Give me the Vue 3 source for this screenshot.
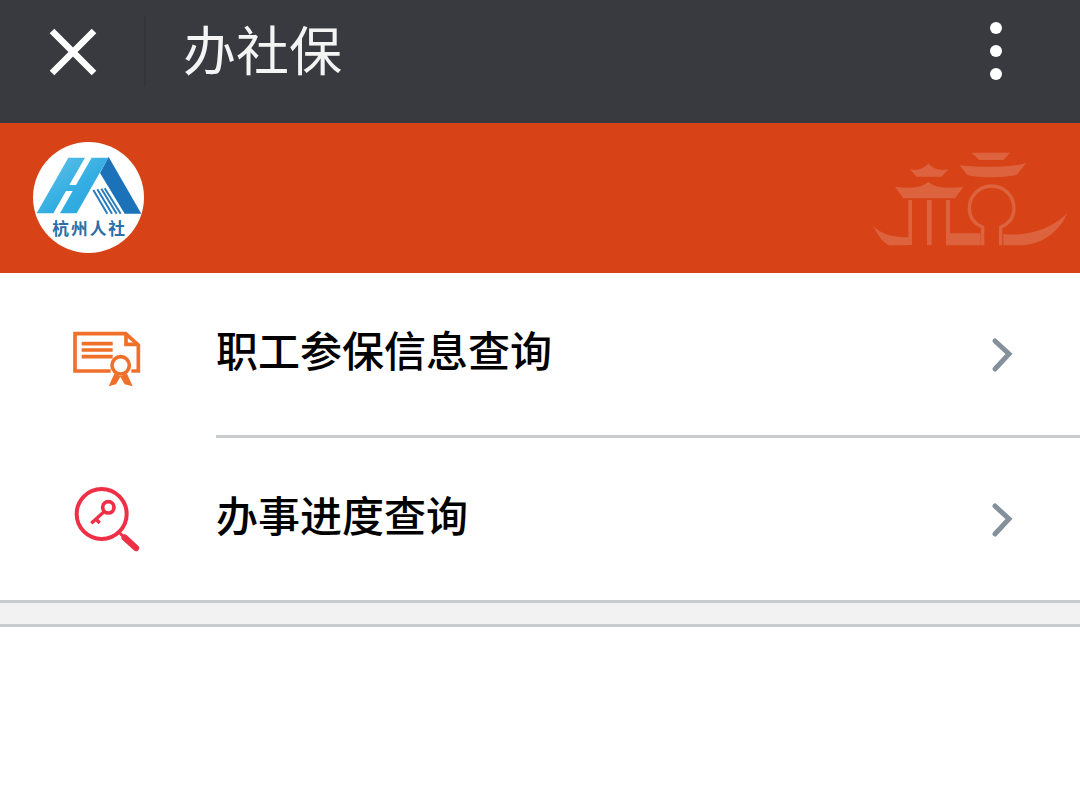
<script setup>
const rows = [
  { id: 'cert', label: '职工参保信息查询' },
  { id: 'search', label: '办事进度查询' }
]
const dots = [0, 1, 2]
</script>

<template>
  <div class="page">
    <header class="topbar">
      <button class="close" aria-label="关闭">
        <svg width="48" height="48" viewBox="0 0 48 48">
          <path d="M3 3 L45 45 M45 3 L3 45" stroke="#fff" stroke-width="6.5" fill="none" />
        </svg>
      </button>
      <span class="divider"></span>
      <h1 class="title">办社保</h1>
      <div class="more">
        <span v-for="d in dots" :key="d" class="dot"></span>
      </div>
    </header>

    <section class="banner">
      <svg class="logo" width="111" height="111" viewBox="39 21 333 333">
        <defs>
          <linearGradient id="lightbar" x1="0" y1="0" x2="1" y2="1">
            <stop offset="0" stop-color="#66c3e9" />
            <stop offset="0.55" stop-color="#34aee2" />
            <stop offset="1" stop-color="#27a6de" />
          </linearGradient>
        </defs>
        <circle cx="205.5" cy="187.5" r="166.5" fill="#fff" />
        <path d="M145 68 H195 L148 150 H168 L215 68 H265 L170 235 H120 L158 168 H138 L100 235 H50 Z" fill="url(#lightbar)" />
        <path d="M266 66 L364 236 H314 L240 114 Z" fill="#1b72b8" />
        <path d="M220 165 L262 236 M232 163 L276 236 M244 161 L290 236 M254 160 L302 236" stroke="#2a7cc0" stroke-width="6" fill="none" />
        <text class="logo-text" x="97" y="300">杭州人社</text>
      </svg>
      <svg class="landmark" width="220" height="130" viewBox="0 0 660 390">
        <g fill="#fff" fill-opacity="0.17">
          <path d="M335 68 H450 L430 90 H358 Z" />
          <path d="M298 105 C340 113 450 113 498 100 L470 135 C430 144 350 144 322 135 Z" />
          <path d="M150 118 C165 122 190 120 205 100 C220 120 245 122 265 118 L245 140 H170 Z" />
          <path d="M105 170 C140 176 185 175 205 155 C225 175 270 176 310 170 L285 205 H130 Z" />
          <rect x="145" y="210" width="11" height="135" />
          <rect x="201" y="210" width="14" height="135" />
          <rect x="258" y="210" width="12" height="100" />
          <path d="M40 288 C60 310 90 322 145 322 V346 H88 C70 340 50 312 40 288 Z" />
          <path d="M258 310 H362 V346 H258 Z" />
          <path d="M430 312 C500 320 570 300 622 250 C600 300 550 346 480 346 H430 Z" />
        </g>
        <path d="M368 346 V292 C345 282 328 262 328 235 A67 67 0 0 1 462 235 C462 262 445 282 422 292 V346" fill="none" stroke="#fff" stroke-opacity="0.17" stroke-width="10" />
      </svg>
    </section>

    <ul class="list">
      <li v-for="row in rows" :key="row.id" class="row">
        <div class="icon-cell">
          <svg v-if="row.id === 'cert'" class="icon icon-cert" width="100" height="80" viewBox="0 0 300 240">
            <g fill="none" stroke="#f0702a" stroke-width="11">
              <path d="M152 150 H45 V38 H197 L235 72 V150 H214" />
              <path d="M198 38 V70 H235" />
              <path d="M65 68 H158 M65 87 H158 M65 107 H158" />
              <circle cx="182" cy="133" r="26" />
            </g>
            <path d="M163 158 L146 196 L168 190 L181 167 L194 190 L218 196 L201 158 L182 165 Z" fill="#f0702a" />
          </svg>
          <svg v-else class="icon" width="100" height="80" viewBox="0 0 300 240">
            <g fill="none" stroke="#ee2f45">
              <circle cx="125" cy="105" r="75" stroke-width="12" />
              <circle cx="145" cy="85" r="17" stroke-width="11" />
              <path d="M132 98 L94 133 M108 120 L119 132" stroke-width="10" />
              <path d="M180 163 L192 174" stroke-width="9" />
              <path d="M194 176 L228 207" stroke-width="19" stroke-linecap="round" />
            </g>
          </svg>
        </div>
        <div class="row-body">
          <span class="label">{{ row.label }}</span>
          <svg class="chevron" width="24" height="36" viewBox="0 0 24 36">
            <path d="M5 4 L19 17 L5 32" fill="none" stroke="#84909b" stroke-width="5" stroke-linecap="round" />
          </svg>
        </div>
      </li>
    </ul>

    <div class="band"></div>
  </div>
</template>

<style scoped>
.page {
  width: 1080px;
  min-height: 786px;
  background: #fff;
  font-family: "Noto Sans CJK SC", "Noto Sans", sans-serif;
}

.topbar {
  height: 123px;
  background: #393a3f;
  display: flex;
  align-items: center;
  box-sizing: border-box;
  padding: 0 0 0 49px;
}

.close {
  width: 48px;
  height: 48px;
  padding: 0;
  border: 0;
  background: none;
  display: block;
  margin-bottom: 19px;
}

.close svg {
  display: block;
}

.divider {
  width: 2px;
  height: 71px;
  margin: -20px 37px 0 47px;
  background: #333438;
}

.title {
  margin: -28px 0 0;
  font-size: 53px;
  font-weight: 400;
  line-height: 72px;
  color: #f4f4f4;
  flex: 1;
}

.more {
  width: 24px;
  margin: -22px 72px 0 0;
  display: flex;
  flex-direction: column;
  align-items: center;
  gap: 11px;
}

.dot {
  width: 12px;
  height: 12px;
  border-radius: 50%;
  background: #fff;
}

.banner {
  height: 150px;
  background: #d74317;
  display: flex;
  justify-content: space-between;
  padding-left: 33px;
}

.logo {
  margin-top: 19px;
}

.logo-text {
  font-size: 50px;
  font-weight: 700;
  letter-spacing: 6px;
  fill: #2c6ea6;
}

.landmark {
  margin-top: 7px;
}

.list {
  list-style: none;
  margin: 0;
  padding: 0;
  border-bottom: 3px solid #c9cacc;
}

.row {
  height: 165px;
  display: flex;
}

.row + .row {
  height: 162px;
}

.icon-cell {
  width: 156px;
  padding-left: 60px;
  display: flex;
  align-items: center;
}

.icon {
  display: block;
}

.icon-cert {
  margin-top: 10px;
}

.row-body {
  flex: 1;
  display: flex;
  align-items: center;
  justify-content: space-between;
  padding-right: 66px;
  box-sizing: border-box;
}

.row:first-child .row-body {
  border-bottom: 3px solid #c9cacc;
}

.label {
  font-size: 42px;
  font-weight: 500;
  color: #000;
  line-height: 60px;
  margin-top: -10px;
}

.chevron {
  display: block;
  margin-top: 2px;
}

.band {
  height: 21px;
  background: #f2f2f2;
  border-bottom: 3px solid #c9cacc;
}
</style>

<style>
html,
body {
  margin: 0;
  background: #fff;
}
</style>
